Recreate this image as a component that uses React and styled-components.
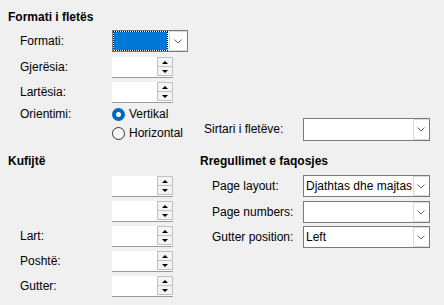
import React from "react";
import styled, { createGlobalStyle } from "styled-components";

const Global = createGlobalStyle`
  html, body { margin: 0; padding: 0; background: #f0f0f0; }
`;

const Page = styled.div`
  width: 444px;
  height: 305px;
  box-sizing: border-box;
  padding: 10px 0 0 8px;
  background: #f0f0f0;
  font-family: "Liberation Sans", Arial, sans-serif;
  font-size: 12px;
  line-height: 15px;
  color: #000;
  overflow: hidden;
`;

const Top = styled.div`
  display: flex;
  align-items: flex-end;
`;

const Column = styled.div`
  display: flex;
  flex-direction: column;
  width: ${(p) => (p.$w ? `${p.$w}px` : "auto")};
  flex: none;
`;

const Heading = styled.div`
  font-weight: bold;
  height: 15px;
  white-space: nowrap;
`;

const Row = styled.div`
  display: flex;
  align-items: ${(p) => (p.$top ? "flex-start" : "center")};
  margin-top: ${(p) => p.$mt || 0}px;
  margin-bottom: ${(p) => p.$mb || 0}px;
  padding-left: ${(p) => p.$indent || 0}px;
`;

const Label = styled.div`
  width: ${(p) => p.$w}px;
  flex: none;
  white-space: nowrap;
  line-height: ${(p) => p.$lh || 15}px;
`;

const Bottom = styled.div`
  display: flex;
  margin-top: 11px;
`;

/* Combobox */
const ComboBox = styled.div`
  box-sizing: border-box;
  width: ${(p) => p.$w}px;
  height: ${(p) => p.$h}px;
  border: 1px solid #7a7a7a;
  background: #fff;
  display: flex;
  align-items: stretch;
`;

const ComboValue = styled.div`
  flex: 1;
  min-width: 0;
  padding-left: 2px;
  display: flex;
  align-items: center;
  white-space: nowrap;
  overflow: hidden;
`;

const FocusValue = styled.div`
  flex: 1;
  box-sizing: border-box;
  border: 1px dotted #000;
  background: linear-gradient(#0078d7, #0078d7) padding-box, #fff border-box;
  margin-right: 1px;
`;

const DropButton = styled.div`
  box-sizing: border-box;
  width: ${(p) => p.$w || 16}px;
  margin: 0 0 0 0;
  border: 1px solid #dadada;
  border-right-color: #fff;
  background: #fff;
  display: flex;
  align-items: center;
  justify-content: center;
  flex: none;
`;

const Chevron = () => (
  <svg width="8" height="5" viewBox="0 0 8 5">
    <polyline points="0.5,0.5 4,4 7.5,0.5" fill="none" stroke="#6a6a6a" strokeWidth="1" />
  </svg>
);

const Combo = ({ w, h, value, focused, btn }) => (
  <ComboBox $w={w} $h={h}>
    {focused ? <FocusValue /> : <ComboValue>{value}</ComboValue>}
    <DropButton $w={btn}>
      <Chevron />
    </DropButton>
  </ComboBox>
);

/* Spin field */
const SpinBox = styled.div`
  box-sizing: border-box;
  width: 61px;
  height: 21px;
  background: #fff;
  border-bottom: 1px solid #9a9a9a;
  display: flex;
  justify-content: flex-end;
  align-items: flex-start;
`;

const SpinButtons = styled.div`
  box-sizing: border-box;
  width: 16px;
  height: 19px;
  border: 1px solid #c2c2c2;
  display: flex;
  flex-direction: column;
  background: #f3f3f3;
`;

const SpinButton = styled.div`
  flex: 1;
  display: flex;
  align-items: center;
  justify-content: center;
  border-top: ${(p) => (p.$down ? "1px solid #c2c2c2" : "none")};
`;

const Arrow = styled.div`
  width: 0;
  height: 0;
  border-left: 3px solid transparent;
  border-right: 3px solid transparent;
  ${(p) =>
    p.$down ? "border-top: 3px solid #000;" : "border-bottom: 3px solid #000;"}
`;

const Spin = () => (
  <SpinBox>
    <SpinButtons>
      <SpinButton>
        <Arrow />
      </SpinButton>
      <SpinButton $down>
        <Arrow $down />
      </SpinButton>
    </SpinButtons>
  </SpinBox>
);

/* Radio */
const RadioGroup = styled.div`
  display: flex;
  flex-direction: column;
`;

const RadioItem = styled.div`
  display: flex;
  align-items: center;
  height: 19px;
  gap: 4px;
  white-space: nowrap;
`;

const RadioCircle = styled.div`
  box-sizing: border-box;
  width: 13px;
  height: 13px;
  border-radius: 50%;
  flex: none;
  ${(p) =>
    p.$checked
      ? "background: #0067c0; display:flex; align-items:center; justify-content:center;"
      : "border: 1px solid #333; background: #f7f7f7;"}
`;

const RadioDot = styled.div`
  width: 5px;
  height: 5px;
  border-radius: 50%;
  background: #fff;
`;

const Radio = ({ checked, children }) => (
  <RadioItem>
    <RadioCircle $checked={checked}>{checked && <RadioDot />}</RadioCircle>
    {children}
  </RadioItem>
);

export default function App() {
  return (
    <>
      <Global />
      <Page>
        <Top>
          <Column $w={196}>
            <Heading>Formati i fletës</Heading>
            <Row $mt={5} $indent={12}>
              <Label $w={92}>Formati:</Label>
              <Combo w={76} h={22} focused btn={18} />
            </Row>
            <Row $mt={5} $indent={12}>
              <Label $w={92}>Gjerësia:</Label>
              <Spin />
            </Row>
            <Row $mt={4} $indent={12}>
              <Label $w={92}>Lartësia:</Label>
              <Spin />
            </Row>
            <Row $mt={2} $indent={12} $top>
              <Label $w={92} $lh={19}>
                Orientimi:
              </Label>
              <RadioGroup>
                <Radio checked>Vertikal</Radio>
                <Radio>Horizontal</Radio>
              </RadioGroup>
            </Row>
          </Column>
          <Row $mb={2}>
            <Label $w={99}>Sirtari i fletëve:</Label>
            <Combo w={127} h={23} value="" />
          </Row>
        </Top>
        <Bottom>
          <Column $w={192}>
            <Heading>Kufijtë</Heading>
            <Row $mt={7} $indent={12}>
              <Label $w={92} />
              <Spin />
            </Row>
            <Row $mt={4} $indent={12}>
              <Label $w={92} />
              <Spin />
            </Row>
            <Row $mt={4} $indent={12}>
              <Label $w={92}>Lart:</Label>
              <Spin />
            </Row>
            <Row $mt={4} $indent={12}>
              <Label $w={92}>Poshtë:</Label>
              <Spin />
            </Row>
            <Row $mt={4} $indent={12}>
              <Label $w={92}>Gutter:</Label>
              <Spin />
            </Row>
          </Column>
          <Column>
            <Heading>Rregullimet e faqosjes</Heading>
            <Row $mt={6} $indent={12}>
              <Label $w={91}>Page layout:</Label>
              <Combo w={127} h={22} value="Djathtas dhe majtas" />
            </Row>
            <Row $mt={4} $indent={12}>
              <Label $w={91}>Page numbers:</Label>
              <Combo w={127} h={22} value="" />
            </Row>
            <Row $mt={3} $indent={12}>
              <Label $w={91}>Gutter position:</Label>
              <Combo w={127} h={22} value="Left" />
            </Row>
          </Column>
        </Bottom>
      </Page>
    </>
  );
}
